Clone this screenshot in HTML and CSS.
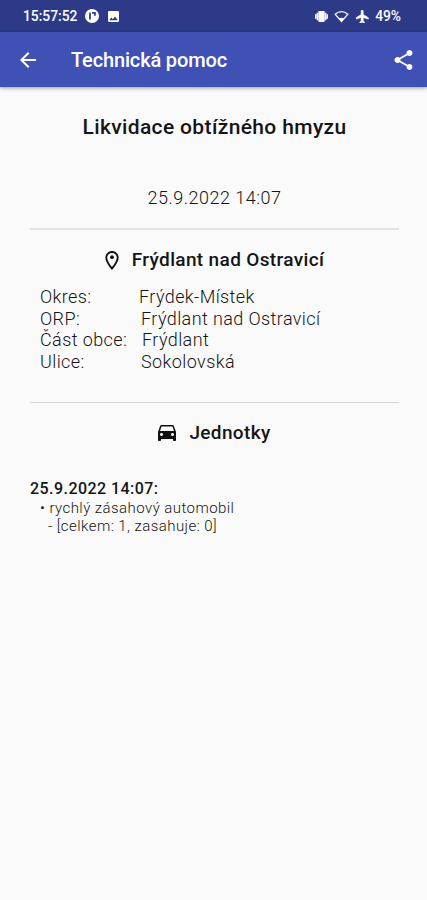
FILE: index.html
```
<!DOCTYPE html>
<html lang="cs">
<head>
    <meta charset="UTF-8">
    <meta name="viewport" content="width=device-width, initial-scale=1.0">
    <title>Technická pomoc</title>
    <link rel="stylesheet" href="styles.css">
</head>
<body>
    <!-- Status bar -->
    <div class="status-bar">
        <span class="clock">15:57:52</span>
        <svg class="icon-app" viewBox="0 0 24 24"><circle cx="12" cy="12" r="12" fill="#fff"/><path d="M8.500 6v12M12 6.500h5v5" fill="none" stroke="#2d3a88" stroke-width="3"/></svg>
        <svg class="icon-image" viewBox="3 3 18 18"><path fill="#fff" d="M21 19V5c0-1.100-.9-2-2-2H5c-1.100 0-2 .9-2 2v14c0 1.100.9 2 2 2h14c1.100 0 2-.9 2-2zM8.500 13.500l2.500 3.010L14.500 12l4.500 6H5l3.500-4.500z"/></svg>
        <div class="status-right">
            <svg class="icon-vibrate" viewBox="0 0 24 24"><path fill="#fff" d="M0 16h2.500V8H0v8zm3 3h2.500V5H3v14zM21.500 8v8H24V8h-2.500zm-3 11H21V5h-2.500v14zM16.500 2h-9C6.670 2 6 2.670 6 3.500v17c0 .83.670 1.500 1.500 1.500h9c.83 0 1.500-.67 1.500-1.500v-17c0-.83-.67-1.500-1.500-1.500z"/></svg>
            <svg class="icon-wifi" viewBox="0 0 24 20"><path d="M2 6.500C8 1 16 1 22 6.500L12 18z" fill="none" stroke="#fff" stroke-width="2"/><path d="M7.500 13c3-1.500 6-1.500 9 0L12 18z" fill="#fff"/></svg>
            <svg class="icon-plane" viewBox="2 2 20 20"><path fill="#fff" stroke="#fff" d="M21 16v-2l-8-5V3.500c0-.83-.67-1.500-1.500-1.500S10 2.670 10 3.500V9l-8 5v2l8-2.500V19l-2 1.500V22l3.500-1 3.500 1v-1.500L13 19v-5.500l8 2.500z"/></svg>
            <span class="battery">49%</span>
        </div>
    </div>

    <!-- Toolbar -->
    <header class="toolbar">
        <svg class="icon-back" viewBox="4 4 16 16"><path fill="#fff" d="M20 11H7.830l5.590-5.590L12 4l-8 8 8 8 1.410-1.410L7.830 13H20v-2z"/></svg>
        <h1>Technická pomoc</h1>
        <svg class="icon-share" viewBox="3 2 18 20"><path fill="#fff" d="M18 16.080c-.76 0-1.440.3-1.960.77L8.910 12.700c.05-.23.090-.46.090-.7s-.04-.47-.09-.7l7.050-4.110c.54.500 1.250.81 2.040.81 1.660 0 3-1.340 3-3s-1.340-3-3-3-3 1.340-3 3c0 .24.040.47.090.7L8.040 9.810C7.500 9.310 6.790 9 6 9c-1.660 0-3 1.340-3 3s1.340 3 3 3c.79 0 1.500-.31 2.040-.81l7.120 4.160c-.05.21-.08.43-.08.65 0 1.610 1.310 2.920 2.920 2.920s2.920-1.310 2.920-2.920-1.310-2.920-2.920-2.920z"/></svg>
    </header>

    <main class="detail">
        <h2 class="event-title">Likvidace obtížného hmyzu</h2>
        <p class="event-date">25.9.2022 14:07</p>
        <hr class="divider thick">

        <!-- Location -->
        <section class="place">
            <div class="section-title">
                <svg class="icon-pin" viewBox="5 2 14 20"><path fill="#111" d="M12 2C8.130 2 5 5.130 5 9c0 5.250 7 13 7 13s7-7.750 7-13c0-3.870-3.130-7-7-7zM7 9c0-2.760 2.240-5 5-5s5 2.240 5 5c0 2.880-2.880 7.190-5 9.880C9.920 16.210 7 11.850 7 9z"/><circle cx="12" cy="8.500" r="2" fill="#111"/></svg>
                <h3 class="city">Frýdlant nad Ostravicí</h3>
            </div>
            <dl class="address">
                <dt>Okres:</dt>
                <dd class="district">Frýdek-Místek</dd>
                <dt>ORP:</dt>
                <dd>Frýdlant nad Ostravicí</dd>
                <dt>Část obce:</dt>
                <dd class="part">Frýdlant</dd>
                <dt>Ulice:</dt>
                <dd>Sokolovská</dd>
            </dl>
        </section>
        <hr class="divider">

        <!-- Units -->
        <section class="units">
            <div class="section-title">
                <svg class="icon-car" viewBox="3 5 18 16"><path fill="#111" d="M18.920 6.010C18.720 5.420 18.160 5 17.500 5h-11c-.66 0-1.210.42-1.420 1.010L3 12v8c0 .55.450 1 1 1h1c.55 0 1-.45 1-1v-1h12v1c0 .55.450 1 1 1h1c.55 0 1-.45 1-1v-8l-2.080-5.990zM6.500 16c-.83 0-1.500-.67-1.500-1.500S5.670 13 6.500 13s1.500.67 1.500 1.500S7.330 16 6.500 16zm11 0c-.83 0-1.500-.67-1.500-1.500s.67-1.500 1.500-1.500 1.500.67 1.500 1.500-.67 1.500-1.500 1.500zM5 11l1.500-4.500h11L19 11H5z"/></svg>
                <h3 class="units-label">Jednotky</h3>
            </div>
            <p class="unit-date">25.9.2022 14:07:</p>
            <p class="unit-name">• rychlý zásahový automobil</p>
            <p class="unit-count">- [celkem: 1, zasahuje: 0]</p>
        </section>
    </main>
</body>
</html>
```
FILE: styles.css
```
* {
    margin: 0;
    padding: 0;
    box-sizing: border-box;
}

body {
    background-color: #fafafa;
    color: #151515;
    font-family: Roboto, sans-serif;
    min-height: 900px;
}

svg {
    display: block;
    flex: none;
}

h1, h2, h3 {
    font-weight: 500;
    white-space: nowrap;
}

/* Status bar */
.status-bar {
    display: flex;
    align-items: center;
    height: 32px;
    padding: 0 26px 0 23px;
    background-color: #2d3a88;
    color: #fff;
    font-size: 13.800px;
    font-weight: 500;
}

.icon-app {
    width: 14px;
    height: 14px;
    margin-left: 8px;
}

.icon-image {
    width: 11px;
    height: 11px;
    margin-left: 9px;
}

.status-right {
    display: flex;
    align-items: center;
    margin-left: auto;
}

.icon-vibrate {
    width: 13px;
    height: 13px;
}

.icon-wifi {
    width: 15px;
    height: 13px;
    margin-left: 6px;
}

.icon-plane {
    width: 13px;
    height: 13px;
    margin: 0 6px 0 7px;
}

/* Toolbar */
.toolbar {
    display: flex;
    align-items: center;
    height: 55px;
    padding: 0 14px 0 20px;
    background-color: #3f51b5;
    box-shadow: 0 1px 4px rgba(0, 0, 0, 0.4);
    color: #fff;
}

.toolbar h1 {
    margin-left: 35px;
    font-size: 20px;
    letter-spacing: -0.150px;
    line-height: 24px;
}

.icon-back {
    width: 16px;
    height: 16px;
}

.icon-share {
    width: 19px;
    height: 20px;
    margin-left: auto;
}

/* Detail */
.detail {
    padding: 27px 28px 0 30px;
}

.event-title {
    text-align: center;
    font-size: 21px;
    letter-spacing: 0.360px;
    line-height: 26px;
}

.event-date {
    margin-top: 46px;
    text-align: center;
    font-size: 18px;
    font-weight: 300;
    letter-spacing: 0.500px;
    line-height: 24px;
}

.divider {
    height: 1px;
    border: 0;
    background-color: #d8d8d8;
}

.divider.thick {
    height: 2px;
    margin-top: 18px;
    background-color: #e2e2e2;
}

.section-title {
    display: flex;
    align-items: center;
    justify-content: center;
    height: 24px;
}

.section-title h3 {
    font-size: 19px;
    letter-spacing: 0.350px;
    line-height: 24px;
}

.place {
    padding-top: 18px;
    height: 172px;
}

.icon-pin {
    width: 14px;
    height: 19px;
    margin-right: 13px;
}

.address {
    display: grid;
    grid-template-columns: 101px 1fr;
    margin: 14px 0 0 10px;
    font-size: 18px;
    font-weight: 300;
    letter-spacing: 0.400px;
    line-height: 21.500px;
    white-space: nowrap;
}

.address .district {
    margin-left: -2px;
}

.address .part {
    margin-left: 1px;
}

.units {
    padding-top: 18px;
}

.icon-car {
    width: 18px;
    height: 16px;
    margin-right: 13px;
}

.unit-date {
    margin-top: 33px;
    font-size: 16px;
    font-weight: 500;
    letter-spacing: 0.450px;
    line-height: 21px;
}

.unit-name,
.unit-count {
    font-size: 15px;
    font-weight: 300;
    letter-spacing: 0.440px;
    line-height: 18px;
}

.unit-name {
    margin-left: 10px;
}

.unit-count {
    margin-left: 18px;
}
```
